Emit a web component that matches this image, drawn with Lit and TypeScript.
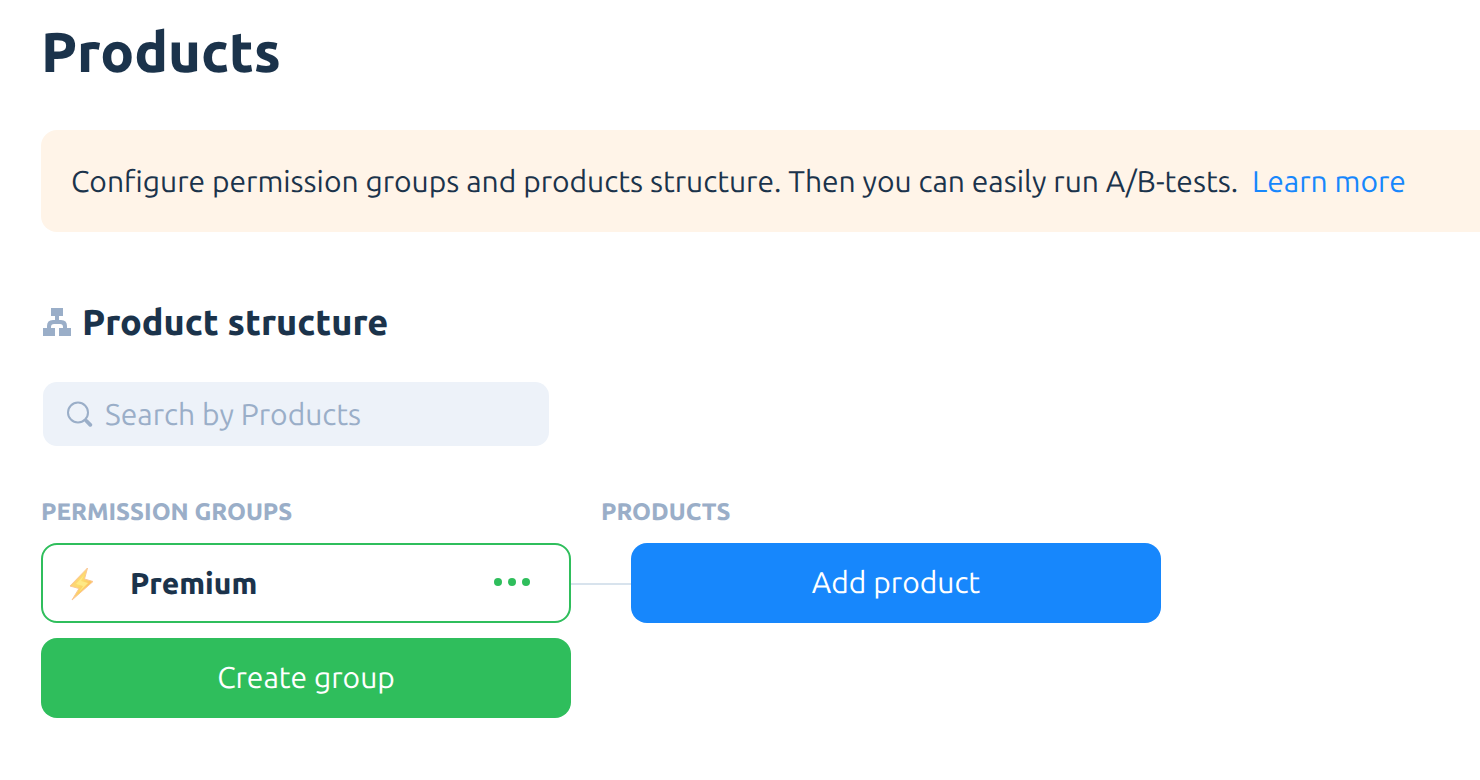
import { LitElement, html, css } from "lit";
import { customElement } from "lit/decorators.js";

@customElement("app-root")
export class AppRoot extends LitElement {
  static styles = css`
    :host {
      display: block;
      min-height: 100vh;
      box-sizing: border-box;
      padding: 16px 0 60px 41px;
      background: #fff;
      color: #1b334b;
      font-family: Ubuntu, "Noto Sans", sans-serif;
      font-size: 30px;
      font-weight: 400;
      line-height: 40px;
      font-variation-settings: "wght" 450;
      text-rendering: geometricPrecision;
    }
    * {
      box-sizing: border-box;
    }
    h1,
    h2,
    h3,
    p {
      margin: 0;
    }
    button,
    input {
      font: inherit;
      font-variation-settings: inherit;
      color: inherit;
      text-rendering: inherit;
      border: 0;
      padding: 0;
    }
    button {
      cursor: pointer;
    }
    svg {
      display: block;
      flex: none;
    }
    .title,
    .section,
    .label,
    .name {
      font-weight: 800;
      font-variation-settings: normal;
    }
    .title {
      font-size: 56px;
      line-height: 72px;
    }
    .banner {
      margin-top: 42px;
      padding: 31px 30px;
      border-radius: 16px 0 0 16px;
      background: #fff4e8;
    }
    .link {
      margin-left: 7px;
      color: #1787fc;
      text-decoration: none;
    }
    .section {
      display: flex;
      align-items: center;
      gap: 11px;
      margin-top: 66px;
      padding-left: 2px;
      font-size: 36px;
      line-height: 48px;
    }
    .search {
      display: flex;
      align-items: center;
      gap: 12px;
      max-width: 506px;
      height: 64px;
      margin: 36px 2px 0;
      padding: 0 24px;
      border-radius: 14px;
      background: #edf2f9;
      color: #9aaec8;
    }
    .field {
      flex: 1;
      min-width: 0;
      height: 40px;
      background: none;
      outline: none;
    }
    .field::placeholder {
      color: #9aaec8;
      opacity: 1;
    }
    .structure {
      display: grid;
      grid-template-columns: repeat(2, minmax(0, 560px));
      margin-top: 50px;
      row-gap: 15px;
    }
    .label {
      color: #9aaec8;
      font-size: 24px;
      line-height: 32px;
      text-transform: uppercase;
    }
    .cell {
      display: flex;
      align-items: center;
    }
    .wire {
      flex: none;
      width: 30px;
      height: 4px;
      border-bottom: 2px solid #d8e3ed;
    }
    .group {
      flex: 1;
      display: flex;
      align-items: center;
      height: 80px;
      padding: 0 36px 0 24px;
      border: 2px solid #2fbe5c;
      border-radius: 16px;
    }
    .name {
      flex: 1;
      padding-left: 33px;
    }
    .more {
      background: none;
      color: #2fbe5c;
    }
    .action {
      flex: 1;
      height: 80px;
      padding-bottom: 2px;
      border-radius: 16px;
      color: #fff;
      text-align: center;
    }
    .add {
      background: #1787fc;
    }
    .create {
      margin-right: 30px;
      background: #2fbe5c;
    }
  `;

  render() {
    return html`
      <main>
        <h1 class="title">Products</h1>
        <p class="banner">
          Configure permission groups and products structure. Then you can easily run A/B-tests.
          <a class="link" href="#learn">Learn more</a>
        </p>
        <h2 class="section">
          <svg width="28" height="28" viewBox="0 0 28 28" fill="#9aaec8" aria-hidden="true">
            <path d="M8 0h12v8h-4v4h2q6 0 6 6v2h4v8H16v-8h4v-1q0-3-3-3h-6q-3 0-3 3v1h4v8H0v-8h4v-2q0-6 6-6h2V8H8z" />
          </svg>
          Product structure
        </h2>
        <label class="search">
          <svg width="26" height="26" viewBox="0 0 26 26" fill="none" stroke="currentColor" aria-hidden="true">
            <circle cx="11" cy="11.500" r="10" stroke-width="2" />
            <path d="M18 18.500l1.500 1.500" stroke-width="2" />
            <path d="M19.500 20l3.800 3.800" stroke-width="3.800" stroke-linecap="round" />
          </svg>
          <input class="field" type="search" placeholder="Search by Products" aria-label="Search by Products" />
        </label>
        <section class="structure">
          <h3 class="label">Permission groups</h3>
          <h3 class="label">Products</h3>
          <div class="cell">
            <div class="group">
              <svg width="30" height="36" viewBox="0 0 30 36" aria-hidden="true">
                <defs>
                  <linearGradient id="bolt" x1="0" y1="0" x2="1" y2="1">
                    <stop offset="0" stop-color="#fbc08a" />
                    <stop offset=".45" stop-color="#fddc6c" />
                    <stop offset="1" stop-color="#f9a54a" />
                  </linearGradient>
                </defs>
                <path d="M20.500 3L3 21l9 2.500L5 35l21-18.500-8.500-2.500z" fill="url(#bolt)" stroke="#fbc795" stroke-width="1" stroke-linejoin="round" />
                <path d="M17 10L9 19l7 2-4 6 9-9-7-2z" fill="#fee985" />
              </svg>
              <span class="name">Premium</span>
              <button class="more" type="button" aria-label="Group actions">
                <svg width="40" height="12" viewBox="0 0 40 12" fill="currentColor" aria-hidden="true">
                  <circle cx="5" cy="5" r="4" />
                  <circle cx="19" cy="5" r="4" />
                  <circle cx="33" cy="5" r="4" />
                </svg>
              </button>
            </div>
            <span class="wire"></span>
          </div>
          <div class="cell">
            <span class="wire"></span>
            <button class="action add" type="button">Add product</button>
          </div>
          <div class="cell">
            <button class="action create" type="button">Create group</button>
          </div>
        </section>
      </main>
    `;
  }
}
